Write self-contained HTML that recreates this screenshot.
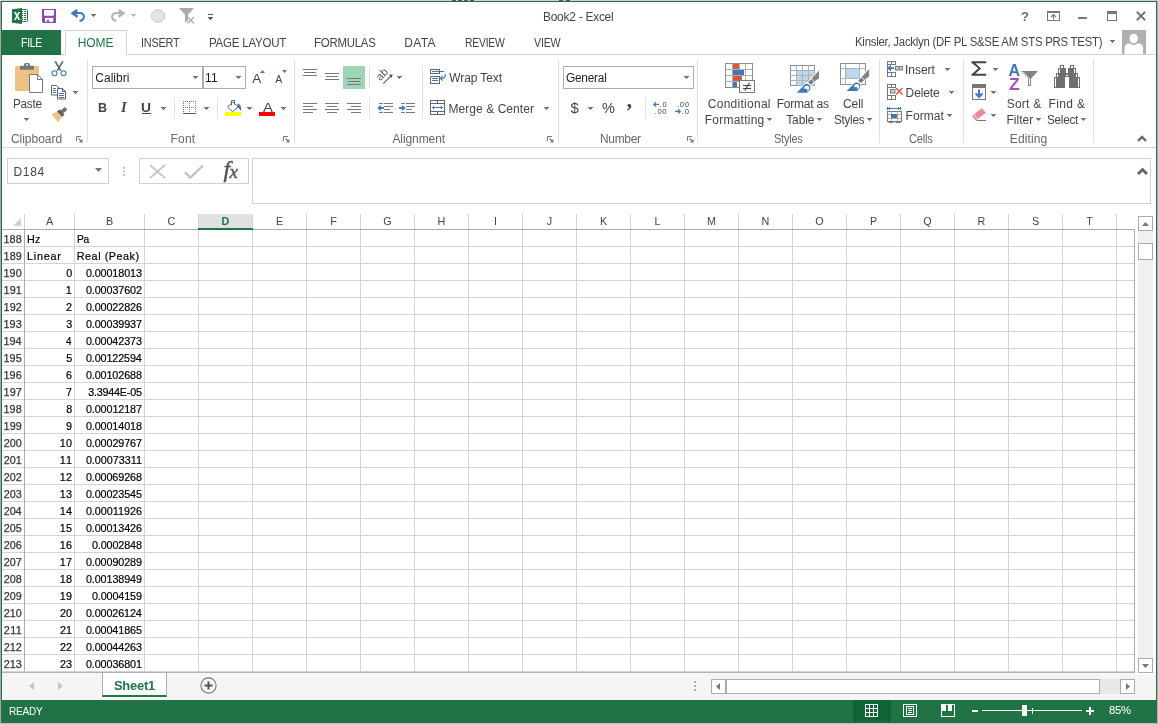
<!DOCTYPE html>
<html lang="en"><head><meta charset="utf-8"><title>Book2 - Excel</title>
<style>
html,body{margin:0;padding:0}
body{width:1158px;height:724px;overflow:hidden;position:relative;background:#c6bfc4;font-family:"Liberation Sans",sans-serif;font-size:12px}
#app,#app div,#app svg,#app span.t{position:absolute}
div{box-sizing:border-box}
span.t{white-space:pre;line-height:20px;height:20px}
#app{left:0;top:0;width:1158px;height:724px;will-change:transform}
svg{overflow:visible}
.sec{left:0;top:0;width:0;height:0}
</style></head>
<body>
<div id="app">
<div class="sec" id="window-frame">
<div style="left:0px;top:0px;width:1158px;height:1px;background:#d6d0d4;"></div>
<div style="left:452px;top:0px;width:4px;height:1px;background:#5a5558;"></div>
<div style="left:458px;top:0px;width:4px;height:1px;background:#5a5558;"></div>
<div style="left:464px;top:0px;width:4px;height:1px;background:#5a5558;"></div>
<div style="left:470px;top:0px;width:4px;height:1px;background:#5a5558;"></div>
<div style="left:559px;top:0px;width:4px;height:1px;background:#5a5558;"></div>
<div style="left:566px;top:0px;width:4px;height:1px;background:#5a5558;"></div>
<div style="left:0px;top:1px;width:1px;height:723px;background:#aaa8a9;"></div>
<div style="left:1157px;top:1px;width:1px;height:723px;background:#b6afb6;"></div>
<div style="left:1px;top:723px;width:1156px;height:1px;background:#c2bbc0;"></div>
<div style="left:1px;top:1px;width:1156px;height:722px;background:#ffffff;border:1px solid #217346;"></div>
</div>
<div class="sec" id="title-bar">
<svg style="left:12px;top:8px" width="17" height="17" viewBox="0 0 17 17" ><rect x="9.5" y="1.5" width="6" height="12" rx="1" fill="#fff" stroke="#217346" stroke-width="1"/><g fill="#217346"><rect x="10" y="3" width="1" height="1"/><rect x="12" y="3" width="2" height="1"/><rect x="10" y="5" width="1" height="1"/><rect x="12" y="5" width="2" height="1"/><rect x="10" y="7" width="1" height="1"/><rect x="12" y="7" width="2" height="1"/><rect x="10" y="9" width="1" height="1"/><rect x="12" y="9" width="2" height="1"/><rect x="10" y="11" width="1" height="1"/><rect x="12" y="11" width="2" height="1"/></g><path d="M0 1.2L10 0V16L0 14.7z" fill="#217346"/><path d="M2 4h1.9l1.2 2.5L6.4 4h1.8L6 8l2.3 4.1H6.4L5.1 9.4 3.8 12.1H2L4.2 8z" fill="#fff"/></svg>
<svg style="left:42px;top:9px" width="14" height="14" viewBox="0 0 14 14" ><path d="M0 0h14v14H1.2L0 12.8z" fill="#8c4aab"/><path d="M2 1h10v4.8q0 1-1 1h-8q-1 0-1-1z" fill="#fff"/><rect x="3" y="8.9" width="8.3" height="3.9" fill="#fff"/><rect x="4.9" y="10.9" width="2.1" height="1.9" fill="#8c4aab"/></svg>
<svg style="left:71px;top:9px" width="15" height="14" viewBox="0 0 15 14" ><path d="M6.2 0.9L1.6 4.2l4.9 3.6" fill="none" stroke="#3d78b8" stroke-width="2.5" stroke-linejoin="miter"/><path d="M2.6 4.1H8.6C11.6 4.1 13 5.9 12.9 7.9 12.8 10.2 11 11.6 8.6 12.1" fill="none" stroke="#3d78b8" stroke-width="2"/></svg>
<svg style="left:91px;top:14px" width="5" height="3" viewBox="0 0 5 3" ><path d="M0 0h5v1h-1v1h-1v1h-1v-1h-1v-1h-1z" fill="#777777" shape-rendering="crispEdges"/></svg>
<svg style="left:110px;top:9px" width="15" height="14" viewBox="0 0 15 14" ><g transform="translate(15,0) scale(-1,1)"><path d="M6.2 0.9L1.6 4.2l4.9 3.6" fill="none" stroke="#b4b4b4" stroke-width="2.5" stroke-linejoin="miter"/><path d="M2.6 4.1H8.6C11.6 4.1 13 5.9 12.9 7.9 12.8 10.2 11 11.6 8.6 12.1" fill="none" stroke="#b4b4b4" stroke-width="2"/></g></svg>
<svg style="left:131px;top:14px" width="5" height="3" viewBox="0 0 5 3" ><path d="M0 0h5v1h-1v1h-1v1h-1v-1h-1v-1h-1z" fill="#bdbdbd" shape-rendering="crispEdges"/></svg>
<svg style="left:151px;top:9px" width="14" height="14" viewBox="0 0 14 14" ><circle cx="7" cy="7" r="6.4" fill="#e6e3e6" stroke="#c6c6c6" stroke-width="1"/></svg>
<svg style="left:179px;top:8px" width="16" height="16" viewBox="0 0 16 16" ><path d="M0 0h15L9 6.8V13L6 14.5V6.8z" fill="#ababab"/><path d="M8.6 9l6.4 6.4M15 9l-6.4 6.4" stroke="#b5b5b5" stroke-width="1.5" fill="none"/><path d="M8.6 9l6.4 6.4M15 9l-6.4 6.4" stroke="#fff" stroke-width="3" fill="none" opacity="0"/></svg>
<svg style="left:208px;top:14px" width="5" height="7" viewBox="0 0 5 7" ><rect x="0" y="0" width="5" height="1" fill="#555"/><path d="M0 3h5v1h-1v1h-1v1h-1v-1h-1v-1h-1z" fill="#555" shape-rendering="crispEdges"/></svg>
<span class="t" id="t1" style="top:7.00px;font-size:12px;color:#444;left:542.62px;letter-spacing:-0.250px;transform:scaleX(0.9948);transform-origin:left center;">Book2 - Excel</span>
<span class="t" id="t2" style="top:6.50px;font-size:13px;color:#6a6a6a;left:1021.10px;font-weight:700;">?</span>
<svg style="left:1047px;top:11px" width="13" height="10" viewBox="0 0 13 10" ><rect x="0.5" y="0.5" width="12" height="9" fill="#fff" stroke="#777" stroke-width="1"/><rect x="0" y="0" width="13" height="2" fill="#777"/><path d="M6.5 8.5V3.5M4 6l2.5-2.5L9 6" fill="none" stroke="#777" stroke-width="1.1"/></svg>
<div style="left:1078px;top:17px;width:9px;height:2px;background:#777;"></div>
<svg style="left:1107px;top:11px" width="10" height="10" viewBox="0 0 10 10" ><rect x="0.5" y="0.5" width="9" height="9" fill="#fff" stroke="#777" stroke-width="1"/><rect x="0" y="0" width="10" height="3" fill="#777"/></svg>
<svg style="left:1136px;top:11px" width="10" height="10" viewBox="0 0 10 10" ><path d="M0.8 0.8l8.4 8.4M9.2 0.8L0.8 9.2" stroke="#777" stroke-width="2" fill="none"/></svg>
</div>
<div class="sec" id="ribbon-tabs">
<div style="left:2px;top:54px;width:1154px;height:1px;background:#d4d4d4"></div>
<div style="left:2px;top:30px;width:59px;height:25px;background:#217346;"></div>
<span class="t" id="t3" style="top:33.00px;font-size:12px;color:#ffffff;left:20.55px;letter-spacing:-0.250px;transform:scaleX(0.8660);transform-origin:left center;">FILE</span>
<div style="left:65px;top:30px;width:62px;height:25px;background:#ffffff;border:1px solid #d4d4d4;border-bottom:none;"></div>
<span class="t" id="t4" style="top:33.00px;font-size:12px;color:#217346;left:77.72px;letter-spacing:-0.067px;">HOME</span>
<span class="t" id="t5" style="top:33.00px;font-size:12px;color:#444444;left:140.79px;letter-spacing:-0.250px;transform:scaleX(0.9086);transform-origin:left center;">INSERT</span>
<span class="t" id="t6" style="top:33.00px;font-size:12px;color:#444444;left:208.55px;letter-spacing:-0.250px;transform:scaleX(0.9613);transform-origin:left center;">PAGE LAYOUT</span>
<span class="t" id="t7" style="top:33.00px;font-size:12px;color:#444444;left:314.46px;letter-spacing:-0.250px;transform:scaleX(0.9526);transform-origin:left center;">FORMULAS</span>
<span class="t" id="t8" style="top:33.00px;font-size:12px;color:#444444;left:404.22px;letter-spacing:0.358px;">DATA</span>
<span class="t" id="t9" style="top:33.00px;font-size:12px;color:#444444;left:464.55px;letter-spacing:-0.250px;transform:scaleX(0.8654);transform-origin:left center;">REVIEW</span>
<span class="t" id="t10" style="top:33.00px;font-size:12px;color:#444444;left:534.25px;letter-spacing:-0.250px;transform:scaleX(0.8918);transform-origin:left center;">VIEW</span>
<span class="t" id="t11" style="top:32.00px;font-size:12px;color:#444444;left:855.47px;letter-spacing:-0.250px;transform:scaleX(0.9481);transform-origin:left center;">Kinsler, Jacklyn (DF PL S&amp;SE AM STS PRS TEST)</span>
<svg style="left:1110px;top:40px" width="5" height="3" viewBox="0 0 5 3" ><path d="M0 0h5v1h-1v1h-1v1h-1v-1h-1v-1h-1z" fill="#777777" shape-rendering="crispEdges"/></svg>
<svg style="left:1122px;top:30px" width="24" height="24" viewBox="0 0 24 24" ><rect width="24" height="24" fill="#b0b0b0"/><path d="M2.5 24V18C2.5 15 4.5 13.4 7 13.4H16.6C19 13.4 21.1 15 21.1 18V24z" fill="#fff"/><ellipse cx="11.7" cy="8.5" rx="5" ry="5.6" fill="#fff" stroke="#b0b0b0" stroke-width="1.6"/></svg>
</div>
<div class="sec" id="ribbon">
<div style="left:2px;top:147px;width:1154px;height:1px;background:#d4d4d4"></div>
<div style="left:87px;top:59px;width:1px;height:84px;background:#e1e1e1"></div>
<div style="left:294px;top:59px;width:1px;height:84px;background:#e1e1e1"></div>
<div style="left:558px;top:59px;width:1px;height:84px;background:#e1e1e1"></div>
<div style="left:697px;top:59px;width:1px;height:84px;background:#e1e1e1"></div>
<div style="left:879px;top:59px;width:1px;height:84px;background:#e1e1e1"></div>
<div style="left:963px;top:59px;width:1px;height:84px;background:#e1e1e1"></div>
<div style="left:1093px;top:59px;width:1px;height:84px;background:#e1e1e1"></div>
<span class="t" id="t12" style="top:129.00px;font-size:12px;color:#666666;left:10.89px;letter-spacing:-0.012px;">Clipboard</span>
<span class="t" id="t13" style="top:129.00px;font-size:12px;color:#666666;left:170.62px;letter-spacing:0.152px;">Font</span>
<span class="t" id="t14" style="top:129.00px;font-size:12px;color:#666666;left:392.38px;letter-spacing:-0.083px;">Alignment</span>
<span class="t" id="t15" style="top:129.00px;font-size:12px;color:#666666;left:599.92px;letter-spacing:-0.250px;transform:scaleX(0.9912);transform-origin:left center;">Number</span>
<span class="t" id="t16" style="top:129.00px;font-size:12px;color:#666666;left:774.10px;letter-spacing:-0.250px;transform:scaleX(0.9160);transform-origin:left center;">Styles</span>
<span class="t" id="t17" style="top:129.00px;font-size:12px;color:#666666;left:908.93px;letter-spacing:-0.250px;transform:scaleX(0.9339);transform-origin:left center;">Cells</span>
<span class="t" id="t18" style="top:129.00px;font-size:12px;color:#666666;left:1009.82px;letter-spacing:0.126px;">Editing</span>
<svg style="left:76px;top:136px" width="7" height="7" viewBox="0 0 7 7" ><path d="M0.5 5V0.5H5" fill="none" stroke="#777" stroke-width="1"/><path d="M2.5 2.5L6 6" stroke="#777" stroke-width="1.2"/><path d="M6.5 3v3.5H3z" fill="#777"/></svg>
<svg style="left:283px;top:136px" width="7" height="7" viewBox="0 0 7 7" ><path d="M0.5 5V0.5H5" fill="none" stroke="#777" stroke-width="1"/><path d="M2.5 2.5L6 6" stroke="#777" stroke-width="1.2"/><path d="M6.5 3v3.5H3z" fill="#777"/></svg>
<svg style="left:547px;top:136px" width="7" height="7" viewBox="0 0 7 7" ><path d="M0.5 5V0.5H5" fill="none" stroke="#777" stroke-width="1"/><path d="M2.5 2.5L6 6" stroke="#777" stroke-width="1.2"/><path d="M6.5 3v3.5H3z" fill="#777"/></svg>
<svg style="left:687px;top:136px" width="7" height="7" viewBox="0 0 7 7" ><path d="M0.5 5V0.5H5" fill="none" stroke="#777" stroke-width="1"/><path d="M2.5 2.5L6 6" stroke="#777" stroke-width="1.2"/><path d="M6.5 3v3.5H3z" fill="#777"/></svg>
<svg style="left:1137px;top:135px" width="10" height="7" viewBox="0 0 10 7" ><path d="M1 6l4-4 4 4" fill="none" stroke="#666" stroke-width="2.3"/></svg>
<div class="sec" id="grp-clipboard">
<svg style="left:14px;top:60px" width="30" height="34" viewBox="0 0 30 34" ><rect x="1" y="6" width="24" height="25" rx="1.5" fill="#eac282"/><rect x="10" y="3" width="6" height="5" rx="1.8" fill="#777"/><rect x="6" y="5.8" width="14" height="3.9" rx="0.6" fill="#777"/><circle cx="13" cy="5" r="0.9" fill="#fff"/><path d="M15.5 14.5h8l5 5v13h-13z" fill="#fff" stroke="#777" stroke-width="1"/><path d="M23.5 14.5v5h5" fill="none" stroke="#777" stroke-width="1"/></svg>
<span class="t" id="t19" style="top:94.00px;font-size:12px;color:#444444;left:12.54px;letter-spacing:-0.250px;transform:scaleX(0.9762);transform-origin:left center;">Paste</span>
<svg style="left:24px;top:118px" width="5" height="3" viewBox="0 0 5 3" ><path d="M0 0h5v1h-1v1h-1v1h-1v-1h-1v-1h-1z" fill="#777777" shape-rendering="crispEdges"/></svg>
<svg style="left:51px;top:61px" width="16" height="16" viewBox="0 0 16 16" ><path d="M3.2 0.2L5.1 0.2L10.6 9.6L8.8 9.8z" fill="#666"/><path d="M12.8 0.2L10.9 0.2L5.4 9.6L7.2 9.8z" fill="#666"/><circle cx="3.5" cy="12.2" r="2.5" fill="#fff" stroke="#3d78b8" stroke-width="1.1"/><circle cx="12.5" cy="12.2" r="2.5" fill="#fff" stroke="#3d78b8" stroke-width="1.1"/></svg>
<svg style="left:51px;top:85px" width="16" height="15" viewBox="0 0 16 15" ><path d="M0.5 0.5h5l2.5 2.5v7h-7.5z" fill="#fff" stroke="#666"/><path d="M6.5 3.5h5l3 3v7.5h-8z" fill="#fff" stroke="#606060"/><path d="M11.5 3.5v3h3" fill="none" stroke="#606060"/><path d="M2 3.5h3M2 5.5h3M2 7.5h3M8 8.5h5M8 10.5h5M8 12.5h5" stroke="#3d78b8" stroke-width="1"/></svg>
<svg style="left:73px;top:91px" width="5" height="3" viewBox="0 0 5 3" ><path d="M0 0h5v1h-1v1h-1v1h-1v-1h-1v-1h-1z" fill="#777777" shape-rendering="crispEdges"/></svg>
<svg style="left:51px;top:107px" width="16" height="16" viewBox="0 0 16 16" ><g transform="translate(9.9,6) rotate(-42)"><rect x="1.2" y="-1.9" width="6" height="3.8" rx="1.2" fill="#707070"/><rect x="-1.9" y="-3.7" width="3.5" height="7.4" rx="0.4" fill="#606060"/><path d="M-1.9 -3.5L-7.9 -5.2V5.2L-1.9 3.5z" fill="#eac282"/></g></svg>
</div>
<div class="sec" id="grp-font">
<div style="left:92px;top:66px;width:111px;height:23px;background:#fff;border:1px solid #ababab;"></div>
<div style="left:203px;top:66px;width:43px;height:23px;background:#fff;border:1px solid #ababab;"></div>
<span class="t" id="t20" style="top:68.00px;font-size:12px;color:#1e1e1e;left:95.19px;letter-spacing:0.050px;">Calibri</span>
<svg style="left:193px;top:76px" width="5" height="3" viewBox="0 0 5 3" ><path d="M0 0h5v1h-1v1h-1v1h-1v-1h-1v-1h-1z" fill="#777777" shape-rendering="crispEdges"/></svg>
<span class="t" id="t21" style="top:68.00px;font-size:12px;color:#1e1e1e;left:204.89px;letter-spacing:0.231px;">11</span>
<svg style="left:236px;top:76px" width="5" height="3" viewBox="0 0 5 3" ><path d="M0 0h5v1h-1v1h-1v1h-1v-1h-1v-1h-1z" fill="#777777" shape-rendering="crispEdges"/></svg>
<span class="t" id="t22" style="top:68.50px;font-size:13.5px;color:#444444;left:252.27px;">A</span>
<svg style="left:260px;top:70px" width="5" height="3" viewBox="0 0 5 3" ><path d="M2.5 0L5 3H0z" fill="#3d78b8"/></svg>
<span class="t" id="t23" style="top:69.00px;font-size:10.5px;color:#444444;left:275.28px;">A</span>
<svg style="left:282px;top:70px" width="5" height="3" viewBox="0 0 5 3" ><path d="M0 0h5L2.5 3z" fill="#3d78b8"/></svg>
<span class="t" id="t24" style="top:98.00px;font-size:12.5px;color:#444444;left:97.96px;font-weight:700;">B</span>
<span class="t" id="t25" style="top:97.00px;font-size:14.5px;color:#444444;left:121.00px;font-weight:700;font-style:italic;font-family:'Liberation Serif',serif;">I</span>
<span class="t" id="t26" style="top:98.00px;font-size:12.5px;color:#444444;left:141.47px;font-weight:700;transform:scaleX(1.1041);transform-origin:left center;">U</span>
<div style="left:142px;top:113px;width:9px;height:1px;background:#444"></div>
<svg style="left:161px;top:107px" width="5" height="3" viewBox="0 0 5 3" ><path d="M0 0h5v1h-1v1h-1v1h-1v-1h-1v-1h-1z" fill="#777777" shape-rendering="crispEdges"/></svg>
<div style="left:174px;top:97px;width:1px;height:22px;background:#e1e1e1"></div>
<svg style="left:183px;top:101px" width="13" height="13" viewBox="0 0 13 13" shape-rendering="crispEdges"><g stroke="#777" stroke-width="1" stroke-dasharray="1 1" fill="none"><path d="M0 0.5h13M0 6.5h13M0.5 0v12M6.5 0v12M12.5 0v12"/></g><rect x="0" y="12" width="13" height="1" fill="#555"/></svg>
<svg style="left:204px;top:107px" width="5" height="3" viewBox="0 0 5 3" ><path d="M0 0h5v1h-1v1h-1v1h-1v-1h-1v-1h-1z" fill="#777777" shape-rendering="crispEdges"/></svg>
<div style="left:217px;top:97px;width:1px;height:22px;background:#e1e1e1"></div>
<svg style="left:227px;top:100px" width="15" height="12" viewBox="0 0 15 12" ><path d="M5.5 2L0.6 7.2l4.9 4.4 5.9-4.7z" fill="#fff" stroke="#666" stroke-width="1"/><path d="M4.5 5.5V0.5h3V4.5" fill="none" stroke="#666" stroke-width="1"/><path d="M10.6 3.4c3 0.8 4.5 4.2 2.9 7.8-0.3-2-1.2-3.2-3.3-4z" fill="#3d78b8"/></svg>
<div style="left:225px;top:112px;width:16px;height:4px;background:#ffff00;"></div>
<svg style="left:247px;top:107px" width="5" height="3" viewBox="0 0 5 3" ><path d="M0 0h5v1h-1v1h-1v1h-1v-1h-1v-1h-1z" fill="#777777" shape-rendering="crispEdges"/></svg>
<span class="t" id="t27" style="top:97.50px;font-size:13.5px;color:#444444;left:262.57px;transform:scaleX(1.0934);transform-origin:left center;">A</span>
<div style="left:259px;top:112px;width:16px;height:4px;background:#ff0000;"></div>
<svg style="left:281px;top:107px" width="5" height="3" viewBox="0 0 5 3" ><path d="M0 0h5v1h-1v1h-1v1h-1v-1h-1v-1h-1z" fill="#777777" shape-rendering="crispEdges"/></svg>
</div>
<div class="sec" id="grp-alignment">
<svg style="left:303px;top:69px" width="14" height="7" viewBox="0 0 14 7" shape-rendering="crispEdges"><rect x="0" y="0" width="14" height="1" fill="#777777"/><rect x="1" y="3" width="12" height="1" fill="#777777"/><rect x="0" y="6" width="14" height="1" fill="#777777"/></svg>
<svg style="left:325px;top:73px" width="14" height="7" viewBox="0 0 14 7" shape-rendering="crispEdges"><rect x="0" y="0" width="14" height="1" fill="#777777"/><rect x="1" y="3" width="12" height="1" fill="#777777"/><rect x="0" y="6" width="14" height="1" fill="#777777"/></svg>
<div style="left:343px;top:66px;width:22px;height:23px;background:#9fd5b7;"></div>
<svg style="left:347px;top:78px" width="14" height="7" viewBox="0 0 14 7" shape-rendering="crispEdges"><rect x="0" y="0" width="14" height="1" fill="#777777"/><rect x="1" y="3" width="12" height="1" fill="#777777"/><rect x="0" y="6" width="14" height="1" fill="#777777"/></svg>
<svg style="left:303px;top:103px" width="14" height="10" viewBox="0 0 14 10" shape-rendering="crispEdges"><rect x="0" y="0" width="14" height="1" fill="#777777"/><rect x="0" y="3" width="10" height="1" fill="#777777"/><rect x="0" y="6" width="14" height="1" fill="#777777"/><rect x="0" y="9" width="10" height="1" fill="#777777"/></svg>
<svg style="left:325px;top:103px" width="14" height="10" viewBox="0 0 14 10" shape-rendering="crispEdges"><rect x="0" y="0" width="14" height="1" fill="#777777"/><rect x="2" y="3" width="10" height="1" fill="#777777"/><rect x="0" y="6" width="14" height="1" fill="#777777"/><rect x="2" y="9" width="10" height="1" fill="#777777"/></svg>
<svg style="left:347px;top:103px" width="14" height="10" viewBox="0 0 14 10" shape-rendering="crispEdges"><rect x="0" y="0" width="14" height="1" fill="#777777"/><rect x="4" y="3" width="10" height="1" fill="#777777"/><rect x="0" y="6" width="14" height="1" fill="#777777"/><rect x="4" y="9" width="10" height="1" fill="#777777"/></svg>
<div style="left:369px;top:66px;width:1px;height:22px;background:#e1e1e1"></div>
<div style="left:369px;top:97px;width:1px;height:22px;background:#e1e1e1"></div>
<svg style="left:377px;top:70px" width="16" height="15" viewBox="0 0 16 15" ><text transform="translate(3.2,11.2) rotate(-45)" x="0" y="0" font-family="Liberation Sans,sans-serif" font-size="11" fill="#555">ab</text><path d="M6.3 13.7L14.6 5.4" stroke="#555" stroke-width="1.1"/><path d="M15.6 4.2l-3.8 0.9 2.9 2.9z" fill="#555"/></svg>
<svg style="left:397px;top:76px" width="5" height="3" viewBox="0 0 5 3" ><path d="M0 0h5v1h-1v1h-1v1h-1v-1h-1v-1h-1z" fill="#777777" shape-rendering="crispEdges"/></svg>
<svg style="left:377px;top:103px" width="16" height="10" viewBox="0 0 16 10" ><g shape-rendering="crispEdges"><rect x="2" y="0" width="4" height="1" fill="#777777"/><rect x="7" y="0" width="9" height="1" fill="#777777"/><rect x="7" y="3" width="9" height="1" fill="#777777"/><rect x="7" y="6" width="6" height="1" fill="#777777"/><rect x="2" y="9" width="4" height="1" fill="#777777"/><rect x="7" y="9" width="9" height="1" fill="#777777"/></g><path d="M7 4.9H2" fill="none" stroke="#3d78b8" stroke-width="2"/><path d="M3.8 1.9L0.2 4.9l3.6 3z" fill="#3d78b8"/></svg>
<svg style="left:399px;top:103px" width="16" height="10" viewBox="0 0 16 10" ><g shape-rendering="crispEdges"><rect x="2" y="0" width="4" height="1" fill="#777777"/><rect x="7" y="0" width="9" height="1" fill="#777777"/><rect x="7" y="3" width="9" height="1" fill="#777777"/><rect x="7" y="6" width="6" height="1" fill="#777777"/><rect x="2" y="9" width="4" height="1" fill="#777777"/><rect x="7" y="9" width="9" height="1" fill="#777777"/></g><path d="M0 4.9h5" fill="none" stroke="#3d78b8" stroke-width="2"/><path d="M3.2 1.9l3.6 3-3.6 3z" fill="#3d78b8"/></svg>
<div style="left:422px;top:65px;width:1px;height:54px;background:#e1e1e1"></div>
<svg style="left:430px;top:69px" width="16" height="15" viewBox="0 0 16 15" ><rect x="0.5" y="0.5" width="9" height="4" fill="#fff" stroke="#666"/><rect x="0.5" y="7.5" width="9" height="7" fill="#fff" stroke="#666"/><path d="M2 2.5h12M2 9.5h6M2 11.5h6" stroke="#3d78b8" stroke-width="1" fill="none"/><path d="M15.3 5c0.5 3-1.2 4.4-4.6 4.4M12.8 7l-2.6 2.4 2.8 2.2" stroke="#3d78b8" stroke-width="1.1" fill="none"/></svg>
<span class="t" id="t28" style="top:68.00px;font-size:12px;color:#444444;left:449.35px;letter-spacing:-0.117px;">Wrap Text</span>
<svg style="left:430px;top:100px" width="15" height="15" viewBox="0 0 15 15" ><rect x="0.5" y="0.5" width="14" height="14" fill="#fff" stroke="#666"/><path d="M0.5 3.5h14M0.5 11.5h14M7.5 0.5v3M7.5 11.5v3" stroke="#666" fill="none"/><path d="M2.5 7.5h10M4.2 5.8l-1.7 1.7 1.7 1.7M10.8 5.8l1.7 1.7-1.7 1.7" stroke="#3d78b8" stroke-width="1" fill="none"/></svg>
<span class="t" id="t29" style="top:99.00px;font-size:12px;color:#444444;left:448.42px;letter-spacing:0.068px;">Merge &amp; Center</span>
<svg style="left:544px;top:107px" width="5" height="3" viewBox="0 0 5 3" ><path d="M0 0h5v1h-1v1h-1v1h-1v-1h-1v-1h-1z" fill="#777777" shape-rendering="crispEdges"/></svg>
</div>
<div class="sec" id="grp-number">
<div style="left:563px;top:66px;width:131px;height:23px;background:#fff;border:1px solid #ababab;"></div>
<span class="t" id="t30" style="top:68.00px;font-size:12px;color:#1e1e1e;left:565.80px;letter-spacing:-0.250px;transform:scaleX(0.9900);transform-origin:left center;">General</span>
<svg style="left:684px;top:76px" width="5" height="3" viewBox="0 0 5 3" ><path d="M0 0h5v1h-1v1h-1v1h-1v-1h-1v-1h-1z" fill="#777777" shape-rendering="crispEdges"/></svg>
<span class="t" id="t31" style="top:97.50px;font-size:15px;color:#444444;left:570.54px;">$</span>
<svg style="left:588px;top:107px" width="5" height="3" viewBox="0 0 5 3" ><path d="M0 0h5v1h-1v1h-1v1h-1v-1h-1v-1h-1z" fill="#777777" shape-rendering="crispEdges"/></svg>
<span class="t" id="t32" style="top:98.00px;font-size:14.5px;color:#444444;left:601.98px;">%</span>
<span class="t" id="t33" style="top:89.60px;font-size:21px;color:#444444;left:626.80px;font-weight:700;font-family:'Liberation Serif',serif;">,</span>
<div style="left:645px;top:97px;width:1px;height:22px;background:#e1e1e1"></div>
<svg style="left:653px;top:101px" width="15" height="14" viewBox="0 0 15 14" ><text x="6.2" y="6.2" font-family="Liberation Sans,sans-serif" font-size="7.6" fill="#3a3a3a" textLength="7.5">.0</text><text x="1.6" y="13" font-family="Liberation Sans,sans-serif" font-size="7.6" fill="#3a3a3a" textLength="12">.00</text><path d="M6 3.4H1M3 1.2L0.8 3.4 3 5.6" fill="none" stroke="#3d78b8" stroke-width="1.2"/></svg>
<svg style="left:675px;top:101px" width="15" height="14" viewBox="0 0 15 14" ><text x="2" y="6.2" font-family="Liberation Sans,sans-serif" font-size="7.6" fill="#3a3a3a" textLength="12">.00</text><text x="6.4" y="13" font-family="Liberation Sans,sans-serif" font-size="7.6" fill="#3a3a3a" textLength="7.5">.0</text><path d="M0 10.4h5M3 8.2l2.2 2.2L3 12.6" fill="none" stroke="#3d78b8" stroke-width="1.2"/></svg>
</div>
<div class="sec" id="grp-styles">
<svg style="left:725px;top:63px" width="31" height="31" viewBox="0 0 31 31" ><rect x="0.5" y="0.5" width="27" height="24" fill="#fff" stroke="#8c8c8c"/><path d="M7.5 0.5v24M14.5 0.5v24M20.5 0.5v24M0.5 6.5h27M0.5 12.5h27M0.5 18.5h27" stroke="#b0b0b0" fill="none"/><rect x="8" y="1" width="6" height="5" fill="#d9583b"/><rect x="8" y="7" width="11" height="5" fill="#3d78b8"/><rect x="8" y="13" width="9" height="5" fill="#d9583b"/><rect x="8" y="19" width="4" height="5" fill="#3d78b8"/><rect x="14.5" y="17.5" width="15" height="12" fill="#fff" stroke="#777"/><path d="M18 22.5h8M18 25.5h8" stroke="#444" stroke-width="1" fill="none"/><path d="M24.4 19.8l-4.6 8" stroke="#444" stroke-width="1.1" fill="none"/></svg>
<span class="t" id="t34" style="top:94.00px;font-size:12px;color:#444444;left:707.79px;letter-spacing:0.267px;">Conditional</span>
<span class="t" id="t35" style="top:110.00px;font-size:12px;color:#444444;left:704.72px;letter-spacing:0.244px;">Formatting</span>
<svg style="left:767px;top:118px" width="5" height="3" viewBox="0 0 5 3" ><path d="M0 0h5v1h-1v1h-1v1h-1v-1h-1v-1h-1z" fill="#777777" shape-rendering="crispEdges"/></svg>
<svg style="left:790px;top:65px" width="32" height="30" viewBox="0 0 32 30" ><rect x="0.5" y="0.5" width="24" height="20" fill="#fff" stroke="#8c8c8c"/><rect x="7" y="6" width="17.5" height="14.5" fill="#bdd7ee"/><path d="M6.5 0.5v20M12.5 0.5v20M18.5 0.5v20M0.5 5.5h24M0.5 10.5h24M0.5 15.5h24" stroke="#b0b0b0" fill="none"/><g transform="translate(7,5.5)"><g stroke="#fff" stroke-width="1.8" stroke-linejoin="round"><path d="M22 0.1V7.7L17.1 11.2L14.7 8.1z" fill="#838383"/><path d="M16.9 11.6L13.6 14.3L11.1 11.6L14.2 8.8z" fill="#777"/><circle cx="9.6" cy="17.3" r="3.7" fill="#3d78b8"/><path d="M-0.4 22.2L6.6 15.2L11 22.2z" fill="#3d78b8"/></g><path d="M22 0.1V7.7L17.1 11.2L14.7 8.1z" fill="#838383"/><path d="M16.9 11.6L13.6 14.3L11.1 11.6L14.2 8.8z" fill="#777"/><circle cx="9.6" cy="17.3" r="3.7" fill="#3d78b8"/><path d="M-0.4 22.2L6.6 15.2L11 22.2z" fill="#3d78b8"/><path d="M7 17.3C7.6 15 10.8 14.5 12 16.6 12.7 18.1 11.8 19.6 10.8 20.2L9.3 17.9 7.6 18.4z" fill="#fff"/></g></svg>
<span class="t" id="t36" style="top:94.00px;font-size:12px;color:#444444;left:776.72px;letter-spacing:-0.225px;">Format as</span>
<span class="t" id="t37" style="top:110.00px;font-size:12px;color:#444444;left:786.23px;letter-spacing:-0.096px;">Table</span>
<svg style="left:817px;top:118px" width="5" height="3" viewBox="0 0 5 3" ><path d="M0 0h5v1h-1v1h-1v1h-1v-1h-1v-1h-1z" fill="#777777" shape-rendering="crispEdges"/></svg>
<svg style="left:840px;top:63px" width="32" height="30" viewBox="0 0 32 30" ><rect x="0.5" y="0.5" width="25" height="21" fill="#fff" stroke="#8c8c8c"/><path d="M5.5 0.5v21M19.5 0.5v21M0.5 5.5h25M0.5 15.5h25" stroke="#b0b0b0" fill="none"/><rect x="6" y="6" width="13" height="9" fill="#bdd7ee"/><g transform="translate(7.1,5.8)"><g stroke="#fff" stroke-width="1.8" stroke-linejoin="round"><path d="M22 0.1V7.7L17.1 11.2L14.7 8.1z" fill="#838383"/><path d="M16.9 11.6L13.6 14.3L11.1 11.6L14.2 8.8z" fill="#777"/><circle cx="9.6" cy="17.3" r="3.7" fill="#3d78b8"/><path d="M-0.4 22.2L6.6 15.2L11 22.2z" fill="#3d78b8"/></g><path d="M22 0.1V7.7L17.1 11.2L14.7 8.1z" fill="#838383"/><path d="M16.9 11.6L13.6 14.3L11.1 11.6L14.2 8.8z" fill="#777"/><circle cx="9.6" cy="17.3" r="3.7" fill="#3d78b8"/><path d="M-0.4 22.2L6.6 15.2L11 22.2z" fill="#3d78b8"/><path d="M7 17.3C7.6 15 10.8 14.5 12 16.6 12.7 18.1 11.8 19.6 10.8 20.2L9.3 17.9 7.6 18.4z" fill="#fff"/></g></svg>
<span class="t" id="t38" style="top:94.00px;font-size:12px;color:#444444;left:842.99px;letter-spacing:-0.053px;">Cell</span>
<span class="t" id="t39" style="top:110.00px;font-size:12px;color:#444444;left:833.67px;letter-spacing:-0.250px;transform:scaleX(0.9685);transform-origin:left center;">Styles</span>
<svg style="left:867px;top:118px" width="5" height="3" viewBox="0 0 5 3" ><path d="M0 0h5v1h-1v1h-1v1h-1v-1h-1v-1h-1z" fill="#777777" shape-rendering="crispEdges"/></svg>
</div>
<div class="sec" id="grp-cells">
<svg style="left:887px;top:61px" width="17" height="16" viewBox="0 0 17 16" ><g fill="#fff" stroke="#777"><rect x="0.5" y="0.5" width="4" height="3"/><rect x="4.5" y="0.5" width="4" height="3"/><rect x="0.5" y="11.5" width="4" height="4"/><rect x="4.5" y="11.5" width="4" height="4"/><path d="M0.5 3.5v8" fill="none"/></g><rect x="8.5" y="5.5" width="7" height="3.5" fill="#bdd7ee" stroke="#777"/><path d="M12 5.5v3.5" stroke="#777"/><path d="M7 7.2H2" fill="none" stroke="#3d78b8" stroke-width="1.8"/><path d="M4 3.8L0.2 7.2 4 10.6z" fill="#3d78b8"/></svg>
<span class="t" id="t40" style="top:60.00px;font-size:12px;color:#444444;left:904.89px;">Insert</span>
<svg style="left:945px;top:68px" width="5" height="3" viewBox="0 0 5 3" ><path d="M0 0h5v1h-1v1h-1v1h-1v-1h-1v-1h-1z" fill="#777777" shape-rendering="crispEdges"/></svg>
<svg style="left:887px;top:84px" width="17" height="16" viewBox="0 0 17 16" ><g fill="#fff" stroke="#777"><rect x="0.5" y="0.5" width="4" height="3"/><rect x="4.5" y="0.5" width="4" height="3"/><rect x="0.5" y="11.5" width="4" height="4"/><rect x="4.5" y="11.5" width="4" height="4"/><path d="M0.5 3.5v8" fill="none"/></g><rect x="3.5" y="5.5" width="4.5" height="3.5" fill="#bdd7ee" stroke="#777"/><path d="M9 4l6.5 6.5M15.5 4L9 10.5" stroke="#d9583b" stroke-width="1.5" fill="none"/></svg>
<span class="t" id="t41" style="top:83.00px;font-size:12px;color:#444444;left:905.62px;letter-spacing:-0.114px;">Delete</span>
<svg style="left:949px;top:91px" width="5" height="3" viewBox="0 0 5 3" ><path d="M0 0h5v1h-1v1h-1v1h-1v-1h-1v-1h-1z" fill="#777777" shape-rendering="crispEdges"/></svg>
<svg style="left:887px;top:107px" width="16" height="16" viewBox="0 0 16 16" ><path d="M0.5 0v3M13.5 0v3M1 1.5h12M3 0.2L1.4 1.5 3 2.8M11 0.2l1.6 1.3L11 2.8" stroke="#3d78b8" stroke-width="1" fill="none"/><rect x="0.5" y="4.5" width="14" height="10" fill="#fff" stroke="#777"/><path d="M0.5 7.5h14M0.5 11.5h14M4.5 4.5v10M10.5 4.5v10" stroke="#b0b0b0" fill="none"/><rect x="4" y="7" width="6" height="4" fill="#3d78b8"/><path d="M1.5 15.5h5M8.5 15.5h5" stroke="#777" fill="none"/></svg>
<span class="t" id="t42" style="top:106.00px;font-size:12px;color:#444444;left:905.62px;letter-spacing:0.051px;">Format</span>
<svg style="left:947px;top:114px" width="5" height="3" viewBox="0 0 5 3" ><path d="M0 0h5v1h-1v1h-1v1h-1v-1h-1v-1h-1z" fill="#777777" shape-rendering="crispEdges"/></svg>
</div>
<div class="sec" id="grp-editing">
<svg style="left:971px;top:61px" width="16" height="15" viewBox="0 0 16 15" ><path d="M0.4 0.3h14.8v2H4.4l5.7 5.2-5.9 5.3h11v2H0.4v-1.4l6.9-6.1L0.4 1.7z" fill="#444"/></svg>
<svg style="left:993px;top:68px" width="5" height="3" viewBox="0 0 5 3" ><path d="M0 0h5v1h-1v1h-1v1h-1v-1h-1v-1h-1z" fill="#777777" shape-rendering="crispEdges"/></svg>
<svg style="left:972px;top:84px" width="14" height="16" viewBox="0 0 14 16" ><rect x="0.5" y="0.5" width="13" height="15" fill="#fff" stroke="#777"/><rect x="0" y="0" width="14" height="4" fill="#777"/><path d="M7 5.6v7M3.6 9.4l3.4 3.6 3.4-3.6" fill="none" stroke="#3d78b8" stroke-width="2.1"/></svg>
<svg style="left:991px;top:91px" width="5" height="3" viewBox="0 0 5 3" ><path d="M0 0h5v1h-1v1h-1v1h-1v-1h-1v-1h-1z" fill="#777777" shape-rendering="crispEdges"/></svg>
<svg style="left:972px;top:108px" width="15" height="13" viewBox="0 0 15 13" ><path d="M9.6 0.4L0.6 8l3 4.2 9.8-7.4z" fill="#e98a9b" stroke="#e98a9b" stroke-width="0.8" stroke-linejoin="round"/><path d="M2.2 6.7l3 4.2" stroke="#f6c9d1" stroke-width="1.2" fill="none"/><path d="M2.8 7.6l2.6 3.8" stroke="#fff" stroke-width="0" fill="none"/><path d="M4.5 12.5h9.5" stroke="#777" stroke-width="1"/></svg>
<svg style="left:991px;top:114px" width="5" height="3" viewBox="0 0 5 3" ><path d="M0 0h5v1h-1v1h-1v1h-1v-1h-1v-1h-1z" fill="#777777" shape-rendering="crispEdges"/></svg>
<span class="t" id="t43" style="top:60.70px;font-size:16px;color:#3d78b8;left:1008.60px;font-weight:700;">A</span>
<span class="t" id="t44" style="top:74.50px;font-size:16px;color:#9b59b6;left:1009.48px;font-weight:700;transform:scaleX(1.0968);transform-origin:left center;">Z</span>
<svg style="left:1021px;top:71px" width="17" height="15" viewBox="0 0 17 15" ><path d="M0 0h17L10 7.6V15H7V7.6z" fill="#828282"/><path d="M1.8 0.9L8.5 8V14" stroke="#fff" stroke-width="1" fill="none"/></svg>
<span class="t" id="t45" style="top:94.00px;font-size:12px;color:#444444;left:1006.66px;letter-spacing:0.235px;">Sort &amp;</span>
<span class="t" id="t46" style="top:110.00px;font-size:12px;color:#444444;left:1006.52px;">Filter</span>
<svg style="left:1036px;top:118px" width="5" height="3" viewBox="0 0 5 3" ><path d="M0 0h5v1h-1v1h-1v1h-1v-1h-1v-1h-1z" fill="#777777" shape-rendering="crispEdges"/></svg>
<svg style="left:1054px;top:65px" width="26" height="23" viewBox="0 0 26 23" ><g shape-rendering="crispEdges"><path d="M6 0H10V3H12V12H11V23H0V12H2V8H4V3H6Z" fill="#6e6e6e"/><rect x="7" y="1" width="2" height="2" fill="#fff"/><rect x="5" y="4" width="1" height="4" fill="#fff"/><rect x="3" y="9" width="1" height="3" fill="#fff"/><rect x="1" y="13" width="1" height="9" fill="#fff"/><g transform="translate(26,0) scale(-1,1)"><path d="M6 0H10V3H12V12H11V23H0V12H2V8H4V3H6Z" fill="#6e6e6e"/><rect x="7" y="1" width="2" height="2" fill="#fff"/><rect x="5" y="4" width="1" height="4" fill="#fff"/><rect x="3" y="9" width="1" height="3" fill="#fff"/><rect x="1" y="13" width="1" height="9" fill="#fff"/></g><rect x="12" y="8" width="2" height="4" fill="#6e6e6e"/><rect x="12" y="10" width="2" height="1" fill="#fff"/></g></svg>
<span class="t" id="t47" style="top:94.00px;font-size:12px;color:#444444;left:1048.52px;letter-spacing:0.337px;">Find &amp;</span>
<span class="t" id="t48" style="top:110.00px;font-size:12px;color:#444444;left:1046.77px;letter-spacing:-0.250px;transform:scaleX(0.9753);transform-origin:left center;">Select</span>
<svg style="left:1081px;top:118px" width="5" height="3" viewBox="0 0 5 3" ><path d="M0 0h5v1h-1v1h-1v1h-1v-1h-1v-1h-1z" fill="#777777" shape-rendering="crispEdges"/></svg>
</div>
</div>
<div class="sec" id="formula-bar">
<div style="left:7px;top:158px;width:102px;height:26px;background:#fff;border:1px solid #d0d0d0;"></div>
<span class="t" id="t49" style="top:162.00px;font-size:12px;color:#444;left:13.52px;letter-spacing:0.649px;">D184</span>
<svg style="left:95px;top:168px" width="7" height="4" viewBox="0 0 7 4" ><path d="M0 0h7l-3.5 4z" fill="#777"/></svg>
<svg style="left:123px;top:167px" width="2" height="9" viewBox="0 0 2 9" ><rect x="0" y="0" width="2" height="1.6" fill="#b0b0b0"/><rect x="0" y="3.6" width="2" height="1.6" fill="#b0b0b0"/><rect x="0" y="7.2" width="2" height="1.6" fill="#b0b0b0"/></svg>
<div style="left:139px;top:158px;width:110px;height:26px;background:#fff;border:1px solid #d0d0d0;"></div>
<svg style="left:149px;top:164px" width="17" height="15" viewBox="0 0 17 15" ><path d="M1 1l15 13M16 1L1 14" stroke="#c8c8c8" stroke-width="2" fill="none"/></svg>
<svg style="left:184px;top:164px" width="20" height="15" viewBox="0 0 20 15" ><path d="M1 8.5l5.5 5L19 1.5" stroke="#c4c4c4" stroke-width="2.4" fill="none"/></svg>
<span class="t" id="t50" style="top:159.00px;font-size:24px;color:#555;left:223.50px;font-style:italic;font-family:'Liberation Serif',serif;-webkit-text-stroke:0.45px #555;">f</span>
<span class="t" id="t51" style="top:161.50px;font-size:19px;color:#555;left:229.50px;font-style:italic;font-family:'Liberation Serif',serif;-webkit-text-stroke:0.45px #555;">x</span>
<div style="left:252px;top:158px;width:899px;height:46px;background:#fff;border:1px solid #d0d0d0;"></div>
<svg style="left:1137px;top:167px" width="11" height="8" viewBox="0 0 11 8" ><path d="M1 7l4.5-4.5L10 7" fill="none" stroke="#666" stroke-width="2.9"/></svg>
</div>
<div class="sec" id="worksheet">
<div style="left:198px;top:214px;width:55px;height:15px;background:#e1e1e1;"></div>
<div style="left:24px;top:214px;width:1px;height:15px;background:#d4d4d4"></div>
<div style="left:74px;top:214px;width:1px;height:15px;background:#d4d4d4"></div>
<div style="left:144px;top:214px;width:1px;height:15px;background:#d4d4d4"></div>
<div style="left:198px;top:214px;width:1px;height:15px;background:#d4d4d4"></div>
<div style="left:252px;top:214px;width:1px;height:15px;background:#d4d4d4"></div>
<div style="left:306px;top:214px;width:1px;height:15px;background:#d4d4d4"></div>
<div style="left:360px;top:214px;width:1px;height:15px;background:#d4d4d4"></div>
<div style="left:414px;top:214px;width:1px;height:15px;background:#d4d4d4"></div>
<div style="left:468px;top:214px;width:1px;height:15px;background:#d4d4d4"></div>
<div style="left:522px;top:214px;width:1px;height:15px;background:#d4d4d4"></div>
<div style="left:576px;top:214px;width:1px;height:15px;background:#d4d4d4"></div>
<div style="left:630px;top:214px;width:1px;height:15px;background:#d4d4d4"></div>
<div style="left:684px;top:214px;width:1px;height:15px;background:#d4d4d4"></div>
<div style="left:738px;top:214px;width:1px;height:15px;background:#d4d4d4"></div>
<div style="left:792px;top:214px;width:1px;height:15px;background:#d4d4d4"></div>
<div style="left:846px;top:214px;width:1px;height:15px;background:#d4d4d4"></div>
<div style="left:900px;top:214px;width:1px;height:15px;background:#d4d4d4"></div>
<div style="left:954px;top:214px;width:1px;height:15px;background:#d4d4d4"></div>
<div style="left:1008px;top:214px;width:1px;height:15px;background:#d4d4d4"></div>
<div style="left:1062px;top:214px;width:1px;height:15px;background:#d4d4d4"></div>
<div style="left:1116px;top:214px;width:1px;height:15px;background:#d4d4d4"></div>
<span class="t" id="t52" style="top:211.00px;font-size:10.8px;color:#444;left:-50.50px;width:200px;text-align:center;">A</span>
<span class="t" id="t53" style="top:211.00px;font-size:10.8px;color:#444;left:9.50px;width:200px;text-align:center;">B</span>
<span class="t" id="t54" style="top:211.00px;font-size:10.8px;color:#444;left:71.50px;width:200px;text-align:center;">C</span>
<span class="t" id="t55" style="top:211.00px;font-size:10.8px;color:#217346;left:125.50px;width:200px;text-align:center;font-weight:700;">D</span>
<span class="t" id="t56" style="top:211.00px;font-size:10.8px;color:#444;left:179.50px;width:200px;text-align:center;">E</span>
<span class="t" id="t57" style="top:211.00px;font-size:10.8px;color:#444;left:233.50px;width:200px;text-align:center;">F</span>
<span class="t" id="t58" style="top:211.00px;font-size:10.8px;color:#444;left:287.50px;width:200px;text-align:center;">G</span>
<span class="t" id="t59" style="top:211.00px;font-size:10.8px;color:#444;left:341.50px;width:200px;text-align:center;">H</span>
<span class="t" id="t60" style="top:211.00px;font-size:10.8px;color:#444;left:395.50px;width:200px;text-align:center;">I</span>
<span class="t" id="t61" style="top:211.00px;font-size:10.8px;color:#444;left:449.50px;width:200px;text-align:center;">J</span>
<span class="t" id="t62" style="top:211.00px;font-size:10.8px;color:#444;left:503.50px;width:200px;text-align:center;">K</span>
<span class="t" id="t63" style="top:211.00px;font-size:10.8px;color:#444;left:557.50px;width:200px;text-align:center;">L</span>
<span class="t" id="t64" style="top:211.00px;font-size:10.8px;color:#444;left:611.50px;width:200px;text-align:center;">M</span>
<span class="t" id="t65" style="top:211.00px;font-size:10.8px;color:#444;left:665.50px;width:200px;text-align:center;">N</span>
<span class="t" id="t66" style="top:211.00px;font-size:10.8px;color:#444;left:719.50px;width:200px;text-align:center;">O</span>
<span class="t" id="t67" style="top:211.00px;font-size:10.8px;color:#444;left:773.50px;width:200px;text-align:center;">P</span>
<span class="t" id="t68" style="top:211.00px;font-size:10.8px;color:#444;left:827.50px;width:200px;text-align:center;">Q</span>
<span class="t" id="t69" style="top:211.00px;font-size:10.8px;color:#444;left:881.50px;width:200px;text-align:center;">R</span>
<span class="t" id="t70" style="top:211.00px;font-size:10.8px;color:#444;left:935.50px;width:200px;text-align:center;">S</span>
<span class="t" id="t71" style="top:211.00px;font-size:10.8px;color:#444;left:989.50px;width:200px;text-align:center;">T</span>
<svg style="left:13px;top:218px" width="8" height="8" viewBox="0 0 8 8" ><path d="M8 0v8H0z" fill="#d0d0d0"/></svg>
<div style="left:2px;top:246px;width:1132px;height:1px;background:#d4d4d4"></div>
<div style="left:2px;top:263px;width:1132px;height:1px;background:#d4d4d4"></div>
<div style="left:2px;top:280px;width:1132px;height:1px;background:#d4d4d4"></div>
<div style="left:2px;top:297px;width:1132px;height:1px;background:#d4d4d4"></div>
<div style="left:2px;top:314px;width:1132px;height:1px;background:#d4d4d4"></div>
<div style="left:2px;top:331px;width:1132px;height:1px;background:#d4d4d4"></div>
<div style="left:2px;top:348px;width:1132px;height:1px;background:#d4d4d4"></div>
<div style="left:2px;top:365px;width:1132px;height:1px;background:#d4d4d4"></div>
<div style="left:2px;top:382px;width:1132px;height:1px;background:#d4d4d4"></div>
<div style="left:2px;top:399px;width:1132px;height:1px;background:#d4d4d4"></div>
<div style="left:2px;top:416px;width:1132px;height:1px;background:#d4d4d4"></div>
<div style="left:2px;top:433px;width:1132px;height:1px;background:#d4d4d4"></div>
<div style="left:2px;top:450px;width:1132px;height:1px;background:#d4d4d4"></div>
<div style="left:2px;top:467px;width:1132px;height:1px;background:#d4d4d4"></div>
<div style="left:2px;top:484px;width:1132px;height:1px;background:#d4d4d4"></div>
<div style="left:2px;top:501px;width:1132px;height:1px;background:#d4d4d4"></div>
<div style="left:2px;top:518px;width:1132px;height:1px;background:#d4d4d4"></div>
<div style="left:2px;top:535px;width:1132px;height:1px;background:#d4d4d4"></div>
<div style="left:2px;top:552px;width:1132px;height:1px;background:#d4d4d4"></div>
<div style="left:2px;top:569px;width:1132px;height:1px;background:#d4d4d4"></div>
<div style="left:2px;top:586px;width:1132px;height:1px;background:#d4d4d4"></div>
<div style="left:2px;top:603px;width:1132px;height:1px;background:#d4d4d4"></div>
<div style="left:2px;top:620px;width:1132px;height:1px;background:#d4d4d4"></div>
<div style="left:2px;top:637px;width:1132px;height:1px;background:#d4d4d4"></div>
<div style="left:2px;top:654px;width:1132px;height:1px;background:#d4d4d4"></div>
<div style="left:74px;top:230px;width:1px;height:442px;background:#d4d4d4"></div>
<div style="left:144px;top:230px;width:1px;height:442px;background:#d4d4d4"></div>
<div style="left:198px;top:230px;width:1px;height:442px;background:#d4d4d4"></div>
<div style="left:252px;top:230px;width:1px;height:442px;background:#d4d4d4"></div>
<div style="left:306px;top:230px;width:1px;height:442px;background:#d4d4d4"></div>
<div style="left:360px;top:230px;width:1px;height:442px;background:#d4d4d4"></div>
<div style="left:414px;top:230px;width:1px;height:442px;background:#d4d4d4"></div>
<div style="left:468px;top:230px;width:1px;height:442px;background:#d4d4d4"></div>
<div style="left:522px;top:230px;width:1px;height:442px;background:#d4d4d4"></div>
<div style="left:576px;top:230px;width:1px;height:442px;background:#d4d4d4"></div>
<div style="left:630px;top:230px;width:1px;height:442px;background:#d4d4d4"></div>
<div style="left:684px;top:230px;width:1px;height:442px;background:#d4d4d4"></div>
<div style="left:738px;top:230px;width:1px;height:442px;background:#d4d4d4"></div>
<div style="left:792px;top:230px;width:1px;height:442px;background:#d4d4d4"></div>
<div style="left:846px;top:230px;width:1px;height:442px;background:#d4d4d4"></div>
<div style="left:900px;top:230px;width:1px;height:442px;background:#d4d4d4"></div>
<div style="left:954px;top:230px;width:1px;height:442px;background:#d4d4d4"></div>
<div style="left:1008px;top:230px;width:1px;height:442px;background:#d4d4d4"></div>
<div style="left:1062px;top:230px;width:1px;height:442px;background:#d4d4d4"></div>
<div style="left:1116px;top:230px;width:1px;height:442px;background:#d4d4d4"></div>
<div style="left:2px;top:229px;width:1133px;height:1px;background:#ababab"></div>
<div style="left:198px;top:228px;width:55px;height:2px;background:#217346"></div>
<div style="left:24px;top:229px;width:1px;height:443px;background:#ababab"></div>
<div style="left:1134px;top:229px;width:1px;height:443px;background:#ababab"></div>
<div style="left:2px;top:671px;width:1133px;height:1px;background:#d4d4d4"></div>
<div style="left:1134px;top:229px;width:1px;height:443px;background:#ababab"></div>
<span class="t" id="t72" style="top:228.50px;font-size:10.8px;color:#333;left:3.48px;letter-spacing:0.138px;-webkit-text-stroke:0.25px #333;">188</span>
<span class="t" id="t73" style="top:228.50px;font-size:10.8px;color:#000;left:26.91px;letter-spacing:0.321px;-webkit-text-stroke:0.2px #000;">Hz</span>
<span class="t" id="t74" style="top:228.50px;font-size:10.8px;color:#000;left:76.76px;letter-spacing:-0.250px;transform:scaleX(0.9518);transform-origin:left center;-webkit-text-stroke:0.2px #000;">Pa</span>
<span class="t" id="t75" style="top:245.50px;font-size:10.8px;color:#333;left:3.48px;letter-spacing:0.159px;-webkit-text-stroke:0.25px #333;">189</span>
<span class="t" id="t76" style="top:245.50px;font-size:10.8px;color:#000;left:26.91px;letter-spacing:0.810px;-webkit-text-stroke:0.2px #000;">Linear</span>
<span class="t" id="t77" style="top:245.50px;font-size:10.8px;color:#000;left:76.71px;letter-spacing:0.544px;-webkit-text-stroke:0.2px #000;">Real (Peak)</span>
<span class="t" id="t78" style="top:262.50px;font-size:10.8px;color:#333;left:3.48px;letter-spacing:0.114px;-webkit-text-stroke:0.25px #333;">190</span>
<span class="t" id="t79" style="top:262.50px;font-size:10.8px;color:#000;left:66.18px;-webkit-text-stroke:0.2px #000;">0</span>
<span class="t" id="t80" style="top:262.50px;font-size:10.8px;color:#000;left:85.88px;letter-spacing:-0.106px;-webkit-text-stroke:0.2px #000;">0.00018013</span>
<span class="t" id="t81" style="top:279.50px;font-size:10.8px;color:#333;left:3.48px;letter-spacing:0.167px;-webkit-text-stroke:0.25px #333;">191</span>
<span class="t" id="t82" style="top:279.50px;font-size:10.8px;color:#000;left:65.78px;-webkit-text-stroke:0.2px #000;">1</span>
<span class="t" id="t83" style="top:279.50px;font-size:10.8px;color:#000;left:85.88px;letter-spacing:-0.098px;-webkit-text-stroke:0.2px #000;">0.00037602</span>
<span class="t" id="t84" style="top:296.50px;font-size:10.8px;color:#333;left:3.48px;letter-spacing:0.175px;-webkit-text-stroke:0.25px #333;">192</span>
<span class="t" id="t85" style="top:296.50px;font-size:10.8px;color:#000;left:66.06px;-webkit-text-stroke:0.2px #000;">2</span>
<span class="t" id="t86" style="top:296.50px;font-size:10.8px;color:#000;left:85.88px;letter-spacing:-0.106px;-webkit-text-stroke:0.2px #000;">0.00022826</span>
<span class="t" id="t87" style="top:313.50px;font-size:10.8px;color:#333;left:3.48px;letter-spacing:0.141px;-webkit-text-stroke:0.25px #333;">193</span>
<span class="t" id="t88" style="top:313.50px;font-size:10.8px;color:#000;left:66.19px;-webkit-text-stroke:0.2px #000;">3</span>
<span class="t" id="t89" style="top:313.50px;font-size:10.8px;color:#000;left:85.88px;letter-spacing:-0.098px;-webkit-text-stroke:0.2px #000;">0.00039937</span>
<span class="t" id="t90" style="top:330.50px;font-size:10.8px;color:#333;left:3.48px;letter-spacing:0.062px;-webkit-text-stroke:0.25px #333;">194</span>
<span class="t" id="t91" style="top:330.50px;font-size:10.8px;color:#000;left:66.37px;transform:scaleX(0.9172);transform-origin:left center;-webkit-text-stroke:0.2px #000;">4</span>
<span class="t" id="t92" style="top:330.50px;font-size:10.8px;color:#000;left:85.88px;letter-spacing:-0.106px;-webkit-text-stroke:0.2px #000;">0.00042373</span>
<span class="t" id="t93" style="top:347.50px;font-size:10.8px;color:#333;left:3.48px;letter-spacing:0.130px;-webkit-text-stroke:0.25px #333;">195</span>
<span class="t" id="t94" style="top:347.50px;font-size:10.8px;color:#000;left:66.17px;-webkit-text-stroke:0.2px #000;">5</span>
<span class="t" id="t95" style="top:347.50px;font-size:10.8px;color:#000;left:85.88px;letter-spacing:-0.123px;-webkit-text-stroke:0.2px #000;">0.00122594</span>
<span class="t" id="t96" style="top:364.50px;font-size:10.8px;color:#333;left:3.48px;letter-spacing:0.141px;-webkit-text-stroke:0.25px #333;">196</span>
<span class="t" id="t97" style="top:364.50px;font-size:10.8px;color:#000;left:66.05px;-webkit-text-stroke:0.2px #000;">6</span>
<span class="t" id="t98" style="top:364.50px;font-size:10.8px;color:#000;left:85.88px;letter-spacing:-0.106px;-webkit-text-stroke:0.2px #000;">0.00102688</span>
<span class="t" id="t99" style="top:381.50px;font-size:10.8px;color:#333;left:3.48px;letter-spacing:0.175px;-webkit-text-stroke:0.25px #333;">197</span>
<span class="t" id="t100" style="top:381.50px;font-size:10.8px;color:#000;left:66.05px;-webkit-text-stroke:0.2px #000;">7</span>
<span class="t" id="t101" style="top:381.50px;font-size:10.8px;color:#000;left:88.29px;letter-spacing:-0.242px;-webkit-text-stroke:0.2px #000;">3.3944E-05</span>
<span class="t" id="t102" style="top:398.50px;font-size:10.8px;color:#333;left:3.48px;letter-spacing:0.138px;-webkit-text-stroke:0.25px #333;">198</span>
<span class="t" id="t103" style="top:398.50px;font-size:10.8px;color:#000;left:66.13px;-webkit-text-stroke:0.2px #000;">8</span>
<span class="t" id="t104" style="top:398.50px;font-size:10.8px;color:#000;left:85.88px;letter-spacing:-0.098px;-webkit-text-stroke:0.2px #000;">0.00012187</span>
<span class="t" id="t105" style="top:415.50px;font-size:10.8px;color:#333;left:3.48px;letter-spacing:0.159px;-webkit-text-stroke:0.25px #333;">199</span>
<span class="t" id="t106" style="top:415.50px;font-size:10.8px;color:#000;left:66.09px;-webkit-text-stroke:0.2px #000;">9</span>
<span class="t" id="t107" style="top:415.50px;font-size:10.8px;color:#000;left:85.88px;letter-spacing:-0.106px;-webkit-text-stroke:0.2px #000;">0.00014018</span>
<span class="t" id="t108" style="top:432.50px;font-size:10.8px;color:#333;left:3.76px;letter-spacing:-0.025px;-webkit-text-stroke:0.25px #333;">200</span>
<span class="t" id="t109" style="top:432.50px;font-size:10.8px;color:#000;left:59.78px;letter-spacing:0.229px;-webkit-text-stroke:0.2px #000;">10</span>
<span class="t" id="t110" style="top:432.50px;font-size:10.8px;color:#000;left:85.88px;letter-spacing:-0.098px;-webkit-text-stroke:0.2px #000;">0.00029767</span>
<span class="t" id="t111" style="top:449.50px;font-size:10.8px;color:#333;left:3.76px;letter-spacing:0.027px;-webkit-text-stroke:0.25px #333;">201</span>
<span class="t" id="t112" style="top:449.50px;font-size:10.8px;color:#000;left:59.78px;letter-spacing:1.131px;-webkit-text-stroke:0.2px #000;">11</span>
<span class="t" id="t113" style="top:449.50px;font-size:10.8px;color:#000;left:85.88px;letter-spacing:-0.011px;-webkit-text-stroke:0.2px #000;">0.00073311</span>
<span class="t" id="t114" style="top:466.50px;font-size:10.8px;color:#333;left:3.76px;letter-spacing:0.035px;-webkit-text-stroke:0.25px #333;">202</span>
<span class="t" id="t115" style="top:466.50px;font-size:10.8px;color:#000;left:59.78px;letter-spacing:0.350px;-webkit-text-stroke:0.2px #000;">12</span>
<span class="t" id="t116" style="top:466.50px;font-size:10.8px;color:#000;left:85.88px;letter-spacing:-0.106px;-webkit-text-stroke:0.2px #000;">0.00069268</span>
<span class="t" id="t117" style="top:483.50px;font-size:10.8px;color:#333;left:3.76px;-webkit-text-stroke:0.25px #333;">203</span>
<span class="t" id="t118" style="top:483.50px;font-size:10.8px;color:#000;left:59.78px;letter-spacing:0.282px;-webkit-text-stroke:0.2px #000;">13</span>
<span class="t" id="t119" style="top:483.50px;font-size:10.8px;color:#000;left:85.88px;letter-spacing:-0.108px;-webkit-text-stroke:0.2px #000;">0.00023545</span>
<span class="t" id="t120" style="top:500.50px;font-size:10.8px;color:#333;left:3.76px;letter-spacing:-0.078px;-webkit-text-stroke:0.25px #333;">204</span>
<span class="t" id="t121" style="top:500.50px;font-size:10.8px;color:#000;left:59.78px;letter-spacing:0.123px;-webkit-text-stroke:0.2px #000;">14</span>
<span class="t" id="t122" style="top:500.50px;font-size:10.8px;color:#000;left:85.88px;letter-spacing:-0.017px;-webkit-text-stroke:0.2px #000;">0.00011926</span>
<span class="t" id="t123" style="top:517.50px;font-size:10.8px;color:#333;left:3.76px;letter-spacing:-0.009px;-webkit-text-stroke:0.25px #333;">205</span>
<span class="t" id="t124" style="top:517.50px;font-size:10.8px;color:#000;left:59.78px;letter-spacing:0.261px;-webkit-text-stroke:0.2px #000;">15</span>
<span class="t" id="t125" style="top:517.50px;font-size:10.8px;color:#000;left:85.88px;letter-spacing:-0.106px;-webkit-text-stroke:0.2px #000;">0.00013426</span>
<span class="t" id="t126" style="top:534.50px;font-size:10.8px;color:#333;left:3.76px;-webkit-text-stroke:0.25px #333;">206</span>
<span class="t" id="t127" style="top:534.50px;font-size:10.8px;color:#000;left:59.78px;letter-spacing:0.282px;-webkit-text-stroke:0.2px #000;">16</span>
<span class="t" id="t128" style="top:534.50px;font-size:10.8px;color:#000;left:91.88px;letter-spacing:-0.119px;-webkit-text-stroke:0.2px #000;">0.0002848</span>
<span class="t" id="t129" style="top:551.50px;font-size:10.8px;color:#333;left:3.76px;letter-spacing:0.035px;-webkit-text-stroke:0.25px #333;">207</span>
<span class="t" id="t130" style="top:551.50px;font-size:10.8px;color:#000;left:59.78px;letter-spacing:0.350px;-webkit-text-stroke:0.2px #000;">17</span>
<span class="t" id="t131" style="top:551.50px;font-size:10.8px;color:#000;left:85.88px;letter-spacing:-0.101px;-webkit-text-stroke:0.2px #000;">0.00090289</span>
<span class="t" id="t132" style="top:568.50px;font-size:10.8px;color:#333;left:3.76px;-webkit-text-stroke:0.25px #333;">208</span>
<span class="t" id="t133" style="top:568.50px;font-size:10.8px;color:#000;left:59.78px;letter-spacing:0.276px;-webkit-text-stroke:0.2px #000;">18</span>
<span class="t" id="t134" style="top:568.50px;font-size:10.8px;color:#000;left:85.88px;letter-spacing:-0.101px;-webkit-text-stroke:0.2px #000;">0.00138949</span>
<span class="t" id="t135" style="top:585.50px;font-size:10.8px;color:#333;left:3.76px;letter-spacing:0.020px;-webkit-text-stroke:0.25px #333;">209</span>
<span class="t" id="t136" style="top:585.50px;font-size:10.8px;color:#000;left:59.78px;letter-spacing:0.319px;-webkit-text-stroke:0.2px #000;">19</span>
<span class="t" id="t137" style="top:585.50px;font-size:10.8px;color:#000;left:91.88px;letter-spacing:-0.114px;-webkit-text-stroke:0.2px #000;">0.0004159</span>
<span class="t" id="t138" style="top:602.50px;font-size:10.8px;color:#333;left:3.76px;letter-spacing:-0.025px;-webkit-text-stroke:0.25px #333;">210</span>
<span class="t" id="t139" style="top:602.50px;font-size:10.8px;color:#000;left:60.06px;letter-spacing:-0.051px;-webkit-text-stroke:0.2px #000;">20</span>
<span class="t" id="t140" style="top:602.50px;font-size:10.8px;color:#000;left:85.88px;letter-spacing:-0.123px;-webkit-text-stroke:0.2px #000;">0.00026124</span>
<span class="t" id="t141" style="top:619.50px;font-size:10.8px;color:#333;left:3.76px;letter-spacing:0.426px;-webkit-text-stroke:0.25px #333;">211</span>
<span class="t" id="t142" style="top:619.50px;font-size:10.8px;color:#000;left:60.06px;letter-spacing:0.055px;-webkit-text-stroke:0.2px #000;">21</span>
<span class="t" id="t143" style="top:619.50px;font-size:10.8px;color:#000;left:85.88px;letter-spacing:-0.108px;-webkit-text-stroke:0.2px #000;">0.00041865</span>
<span class="t" id="t144" style="top:636.50px;font-size:10.8px;color:#333;left:3.76px;letter-spacing:0.035px;-webkit-text-stroke:0.25px #333;">212</span>
<span class="t" id="t145" style="top:636.50px;font-size:10.8px;color:#000;left:60.06px;letter-spacing:0.071px;-webkit-text-stroke:0.2px #000;">22</span>
<span class="t" id="t146" style="top:636.50px;font-size:10.8px;color:#000;left:85.88px;letter-spacing:-0.106px;-webkit-text-stroke:0.2px #000;">0.00044263</span>
<span class="t" id="t147" style="top:653.50px;font-size:10.8px;color:#333;left:3.76px;-webkit-text-stroke:0.25px #333;">213</span>
<span class="t" id="t148" style="top:653.50px;font-size:10.8px;color:#000;left:60.06px;-webkit-text-stroke:0.2px #000;">23</span>
<span class="t" id="t149" style="top:653.50px;font-size:10.8px;color:#000;left:85.88px;letter-spacing:-0.100px;-webkit-text-stroke:0.2px #000;">0.00036801</span>
<div style="left:1138px;top:216px;width:15px;height:457px;background:#f0f0f0;"></div>
<div style="left:1138px;top:216px;width:15px;height:15px;background:#fff;border:1px solid #ababab;"></div>
<svg style="left:1142px;top:222px" width="7" height="4" viewBox="0 0 7 4" ><path d="M3.5 0L7 4H0z" fill="#777"/></svg>
<div style="left:1138px;top:243px;width:15px;height:17px;background:#fff;border:1px solid #ababab;"></div>
<div style="left:1138px;top:658px;width:15px;height:15px;background:#fff;border:1px solid #ababab;"></div>
<svg style="left:1142px;top:664px" width="7" height="4" viewBox="0 0 7 4" ><path d="M0 0h7L3.5 4z" fill="#777"/></svg>
</div>
<div class="sec" id="sheet-tabs-and-status">
<div style="left:2px;top:672px;width:1133px;height:28px;background:#f5f5f5;"></div>
<div style="left:1135px;top:675px;width:21px;height:25px;background:#f5f5f5;"></div>
<div style="left:2px;top:672px;width:1133px;height:1px;background:#b2b2b2"></div>
<svg style="left:29px;top:682px" width="5" height="8" viewBox="0 0 5 8" ><path d="M5 0v8L0 4z" fill="#c6c6c6"/></svg>
<svg style="left:58px;top:682px" width="5" height="8" viewBox="0 0 5 8" ><path d="M0 0v8l5-4z" fill="#c6c6c6"/></svg>
<div style="left:102px;top:673px;width:65px;height:24px;background:#fff;border:1px solid #ababab;border-top:none;border-bottom:2px solid #217346;"></div>
<span class="t" id="t150" style="top:675.50px;font-size:13px;color:#217346;left:114.13px;letter-spacing:-0.250px;font-weight:700;transform:scaleX(0.9937);transform-origin:left center;">Sheet1</span>
<svg style="left:200px;top:677px" width="17" height="17" viewBox="0 0 17 17" ><circle cx="8.5" cy="8.5" r="7.6" fill="#f6f6f6" stroke="#777" stroke-width="1.1"/><path d="M8.5 4.5v8M4.5 8.5h8" stroke="#555" stroke-width="2"/></svg>
<svg style="left:694px;top:681px" width="2" height="10" viewBox="0 0 2 10" ><rect y="0" width="2" height="2" fill="#b0b0b0"/><rect y="4" width="2" height="2" fill="#b0b0b0"/><rect y="8" width="2" height="2" fill="#b0b0b0"/></svg>
<div style="left:711px;top:679px;width:424px;height:15px;background:#e8e8e8;"></div>
<div style="left:711px;top:679px;width:15px;height:15px;background:#fff;border:1px solid #ababab;"></div>
<svg style="left:716px;top:683px" width="4" height="7" viewBox="0 0 4 7" ><path d="M4 0v7L0 3.5z" fill="#777"/></svg>
<div style="left:726px;top:679px;width:374px;height:15px;background:#fff;border:1px solid #ababab;"></div>
<div style="left:1120px;top:679px;width:15px;height:15px;background:#fff;border:1px solid #ababab;"></div>
<svg style="left:1126px;top:683px" width="4" height="7" viewBox="0 0 4 7" ><path d="M0 0v7l4-3.5z" fill="#777"/></svg>
<div style="left:2px;top:700px;width:1154px;height:22px;background:#217346;"></div>
<span class="t" id="t151" style="top:701.00px;font-size:11.5px;color:#fff;left:8.58px;letter-spacing:-0.250px;transform:scaleX(0.8710);transform-origin:left center;">READY</span>
<div style="left:853px;top:700px;width:38px;height:22px;background:#0e6435;"></div>
<svg style="left:865px;top:704px" width="13" height="13" viewBox="0 0 13 13" ><rect x="0.5" y="0.5" width="12" height="12" fill="none" stroke="#fff"/><path d="M4.5 0.5v12M8.5 0.5v12M0.5 4.5h12M0.5 8.5h12" stroke="#fff" fill="none"/></svg>
<svg style="left:903px;top:704px" width="14" height="13" viewBox="0 0 14 13" ><rect x="0.5" y="0.5" width="13" height="12" fill="none" stroke="#fff"/><rect x="3.5" y="2.5" width="7" height="8" fill="none" stroke="#fff"/><path d="M5 4.5h4M5 6.5h4M5 8.5h4" stroke="#fff"/></svg>
<svg style="left:941px;top:704px" width="14" height="13" viewBox="0 0 14 13" ><rect x="0.5" y="0.5" width="13" height="12" fill="none" stroke="#fff"/><rect x="1" y="1" width="4" height="6" fill="#fff"/><rect x="7" y="1" width="4" height="6" fill="#fff"/><path d="M5.5 0v8h8" stroke="#fff" fill="none" opacity="0"/></svg>
<div style="left:972px;top:710px;width:6px;height:2px;background:#fff;"></div>
<div style="left:982px;top:710px;width:100px;height:1px;background:#fff"></div>
<div style="left:1022px;top:705px;width:5px;height:11px;background:#fff;"></div>
<div style="left:1032px;top:708px;width:1px;height:6px;background:#fff"></div>
<div style="left:1086px;top:710px;width:8px;height:2px;background:#fff;"></div>
<div style="left:1089px;top:707px;width:2px;height:8px;background:#fff;"></div>
<span class="t" id="t152" style="top:700.00px;font-size:11.5px;color:#fff;left:1109.21px;letter-spacing:-0.250px;transform:scaleX(0.9851);transform-origin:left center;">85%</span>
</div>
</div>
</body></html>
